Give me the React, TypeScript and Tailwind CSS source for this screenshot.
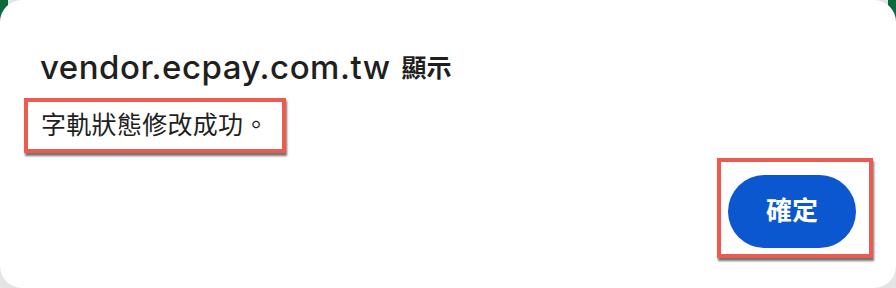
const font = { fontFamily: '"Liberation Sans", "Noto Sans CJK TC", sans-serif' };

export default function App() {
  return (
    <div className="relative h-[288px] w-[896px] overflow-hidden bg-[#e4e4e4]" style={font}>
      {/* bits of the page behind the dialog */}
      <div className="absolute left-0 top-0 h-[26px] w-[8px] bg-[#0a6a3c]" />
      <div className="absolute right-0 top-0 h-[34px] w-[8px] bg-[#0a6a3c]" />

      <div className="relative flex h-full flex-col rounded-[22px] bg-white pl-[40px] pr-[23px] pt-[47px]">
        <h1 className="flex items-center text-[#1f1f1f]">
          <span className="font-['Inter'] text-[33px] font-medium leading-[36px] tracking-[0.5px]">vendor.ecpay.com.tw</span>
          <span className="ml-[11px] mt-[3px] text-[25px] font-bold leading-[36px]">顯示</span>
        </h1>

        <div className="ml-[-16px] mt-[12px] flex">
          <div className="flex h-[55px] w-[262px] items-center border-[4px] border-[#ec5a50] bg-white pl-[13px] shadow-[1px_3px_2px_rgba(0,0,0,0.55)]">
            <span className="text-[25px] leading-none tracking-[0.3px] text-[#1f1f1f]">字軌狀態修改成功。</span>
          </div>
        </div>

        <div className="mt-[5px] flex justify-end">
          <div className="flex h-[100px] w-[156px] items-start border-[4px] border-[#ec5a50] bg-white pl-[7px] pt-[13px] shadow-[1px_3px_2px_rgba(0,0,0,0.55)]">
            <button
              type="button"
              className="flex h-[73px] w-[128px] items-center justify-center rounded-full bg-[#0b57d0] text-[26px] font-bold text-white"
            >
              確定
            </button>
          </div>
        </div>
      </div>
    </div>
  );
}
